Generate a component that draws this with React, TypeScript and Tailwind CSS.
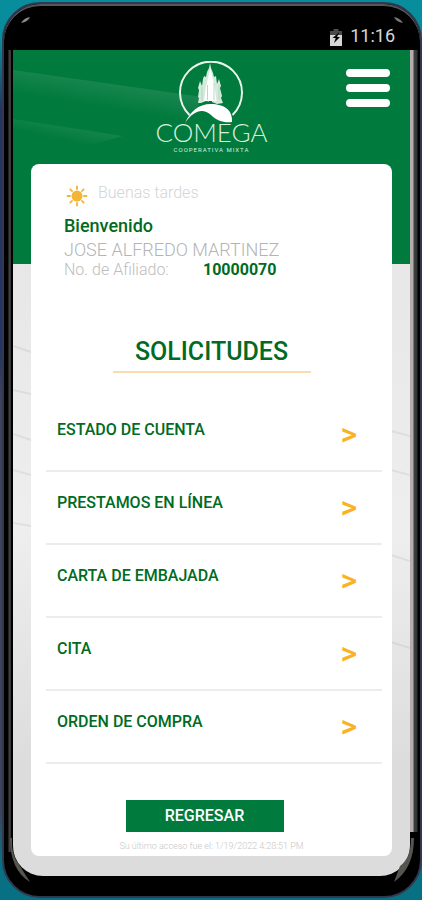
import React from "react";

const options = [
  "ESTADO DE CUENTA",
  "PRESTAMOS EN LÍNEA",
  "CARTA DE EMBAJADA",
  "CITA",
  "ORDEN DE COMPRA",
];

function BatteryIcon() {
  return (
    <svg width="12" height="17" viewBox="0 0 12 17" aria-hidden="true">
      <path d="M3.500 0h5v2H12v4H0V2h3.500z" fill="#4a4a4a" />
      <path d="M0 6h12v11H0z" fill="#d6d6d6" />
      <path d="M9.500 3L2.500 9h3.200L4 14l6-6H7z" fill="#000" />
    </svg>
  );
}

function SunIcon() {
  const angles = [0, 45, 90, 135, 180, 225, 270, 315];
  return (
    <svg width="22" height="22" viewBox="0 0 22 22" aria-hidden="true">
      <circle cx="11" cy="11" r="5.500" fill="#f2b535" />
      {angles.map((a) => (
        <path
          key={a}
          d="M11 1.500v2.500"
          stroke="#f2b535"
          strokeWidth="1.800"
          strokeLinecap="round"
          transform={`rotate(${a} 11 11)`}
        />
      ))}
    </svg>
  );
}

function LogoMark() {
  return (
    <svg width="66" height="64" viewBox="0 0 66 64" aria-hidden="true">
      <path
        d="M11.500 54A31 31 0 1 1 54.500 54"
        fill="none"
        stroke="#e8f6e8"
        strokeWidth="2"
      />
      <path
        d="M20 42l1-5-1-1 1-7-1-2 2-7 2 5 1-7 1-3 2 1 1-5 2-4 1-5 1 5 2 5 1 4 2-1 1 8 2-5 2 7-1 2 2 8-1 2 2 5-6 1-5-2-6-1-5 2z"
        fill="#d5eadc"
      />
      <path d="M26 40l2-14 2-9 2.500-10 2 10 2 8 2 15z" fill="#fff" />
      <path
        d="M24 26v13M41 24v15M29.500 24v15M36 22v17"
        stroke="#a9cfb8"
        strokeWidth="0.800"
      />
      <path d="M31 40h3v4h-3z" fill="#007a3d" />
      <path
        d="M7 62C12 51 20 43 33 43c13 0 22 6 21 18-8 1-15-1-21-7-8-7-17-5-26 8z"
        fill="#fff"
      />
    </svg>
  );
}

function Backdrop() {
  return (
    <svg
      className="absolute inset-0 h-full w-full"
      viewBox="0 0 397 826"
      preserveAspectRatio="none"
      aria-hidden="true"
    >
      <defs>
        <linearGradient id="upperRay" gradientUnits="userSpaceOnUse" x1="60" y1="28" x2="56" y2="52">
          <stop offset="0" stopColor="#fff" stopOpacity="0.090" />
          <stop offset="1" stopColor="#fff" stopOpacity="0" />
        </linearGradient>
        <linearGradient id="lowerRay" gradientUnits="userSpaceOnUse" x1="50" y1="76" x2="47" y2="90">
          <stop offset="0" stopColor="#fff" stopOpacity="0.070" />
          <stop offset="1" stopColor="#fff" stopOpacity="0" />
        </linearGradient>
      </defs>
      <path d="M0 20L190 47L170 80L0 60z" fill="url(#upperRay)" />
      <path d="M0 69L110 86L60 100L0 92z" fill="url(#lowerRay)" />
      <g stroke="#000" strokeOpacity="0.060" strokeWidth="2">
        <path d="M0 296l18 6M0 340l18 4M0 384l18 6M0 420l18 5M0 473l18 3" />
        <path d="M378 381l19 5M378 420l19 5M378 505l19 6M378 592l19 6" />
      </g>
    </svg>
  );
}

function CornerGlints() {
  return (
    <>
      <svg className="absolute top-3 left-4" width="12" height="8" viewBox="0 0 12 8" aria-hidden="true">
        <path d="M1 7Q4 2 10 1Q8 6 1 7z" fill="#8a8a8a" />
      </svg>
      <svg className="absolute top-3 right-4" width="12" height="8" viewBox="0 0 12 8" aria-hidden="true">
        <path d="M11 7Q8 2 2 1Q4 6 11 7z" fill="#777" />
      </svg>
      <svg className="absolute bottom-3 left-1" width="22" height="46" viewBox="0 0 22 46" aria-hidden="true">
        <path d="M4 0Q3 16 10 25L22 44Q2 32 2 0z" fill="#55554f" />
      </svg>
      <svg className="absolute right-1 bottom-3" width="22" height="46" viewBox="0 0 22 46" aria-hidden="true">
        <path d="M17 0Q17 20 6 28L0 44Q20 30 20 0z" fill="#55554f" />
      </svg>
    </>
  );
}

function Header() {
  return (
    <header className="relative grid h-[114px] grid-cols-[1fr_auto_1fr] items-start text-[#d9f0dd]">
      <span />
      <div className="flex flex-col items-center pt-[11px]">
        <LogoMark />
        <span className="-mt-[7px] font-['Lato'] text-[26px] leading-[28px] font-light">
          COMEGA
        </span>
        <span className="text-[6px] leading-[8px] tracking-[1px]">
          COOPERATIVA MIXTA
        </span>
      </div>
      <button
        type="button"
        aria-label="Menú"
        className="mt-[19px] mr-5 flex w-11 flex-col gap-[7px] justify-self-end"
      >
        <span className="h-2 w-full rounded-full bg-white" />
        <span className="h-2 w-full rounded-full bg-white" />
        <span className="h-2 w-full rounded-full bg-white" />
      </button>
    </header>
  );
}

function Card() {
  return (
    <main className="relative mx-[18px] rounded-lg bg-white pt-[18px] text-[#006b22]">
      <section className="pl-[33px] font-light text-[#b4b4b4]">
        <div className="flex h-[34px] items-start gap-[10px] pt-[3px] pl-0.5">
          <SunIcon />
          <span className="text-base leading-4 text-[#d4d4d4]">
            Buenas tardes
          </span>
        </div>
        <h1 className="text-lg leading-[20px] font-medium">
          <span className="text-[#006b22]">Bienvenido</span>
        </h1>
        <p className="pt-1 text-lg leading-[20px]">JOSE ALFREDO MARTINEZ</p>
        <p className="flex text-base leading-5 text-[#bdbdbd]">
          <span className="w-[139px]">No. de Afiliado:</span>
          <strong className="font-bold text-[#006b22]">10000070</strong>
        </p>
      </section>

      <h2 className="mx-auto mt-[58px] w-[198px] border-b-2 border-[#fbdcae] pb-[5px] text-center text-[25px] leading-7 font-medium">
        SOLICITUDES
      </h2>

      <ul className="mt-[26px] mr-[10px] ml-[15px]">
        {options.map((label) => (
          <li key={label} className="border-b-2 border-[#ececec]">
            <a
              href="#"
              className="flex h-[71px] items-start justify-between pt-[21px] pr-[25px] pl-[11px] text-base leading-5 font-medium"
            >
              {label}
              <span className="pt-0.5 text-[32px] leading-6 text-[#fbb124]">
                &gt;
              </span>
            </a>
          </li>
        ))}
      </ul>

      <div className="flex flex-col items-center pt-9 pb-1">
        <button
          type="button"
          className="mr-[14px] h-8 w-[158px] bg-[#007a3d] text-base leading-4 font-medium text-white"
        >
          REGRESAR
        </button>
        <small className="pt-2 text-[9px] leading-3 font-light text-[#c6c6c6]">
          Su último acceso fue el: 1/19/2022 4:28:51 PM
        </small>
      </div>
    </main>
  );
}

export default function App() {
  return (
    <div className="min-h-screen bg-[linear-gradient(#078d9b_0,#078d9b_40px,#263363_110px,#263363_350px,#3d4358_400px,#3d4358_810px,#087083_860px)] pt-0.5 pl-0.5 font-['Roboto','Liberation_Sans',sans-serif]">
      <div className="relative overflow-hidden rounded-[38px] border-2 border-[#303950] bg-black shadow-[inset_0_2px_0_#55555c]">
        <div className="flex h-[46px] items-end justify-end gap-2 pr-[25px] pb-1 text-lg leading-5 text-[#d6d6d6]">
          <BatteryIcon />
          <span>11:16</span>
        </div>
        <div className="flex">
          <div className="mb-6 w-[9px] shrink-0 border-r-2 border-black bg-[linear-gradient(90deg,#000_4px,#444_5px,#333_7px)]" />
          <div className="relative min-w-0 flex-1 overflow-hidden rounded-b-[30px] bg-[linear-gradient(#007a3d_214px,#e7e7e7_214px,#eeeeee_480px,#dcdcdc_720px)] pb-5">
            <Backdrop />
            <Header />
            <Card />
          </div>
          <div className="mb-11 w-[10px] shrink-0 bg-[linear-gradient(90deg,#b5acae_3px,#3d4241_4px,#303333_7px,#000_8px)]" />
        </div>
        <div className="h-5" />
        <CornerGlints />
      </div>
    </div>
  );
}
